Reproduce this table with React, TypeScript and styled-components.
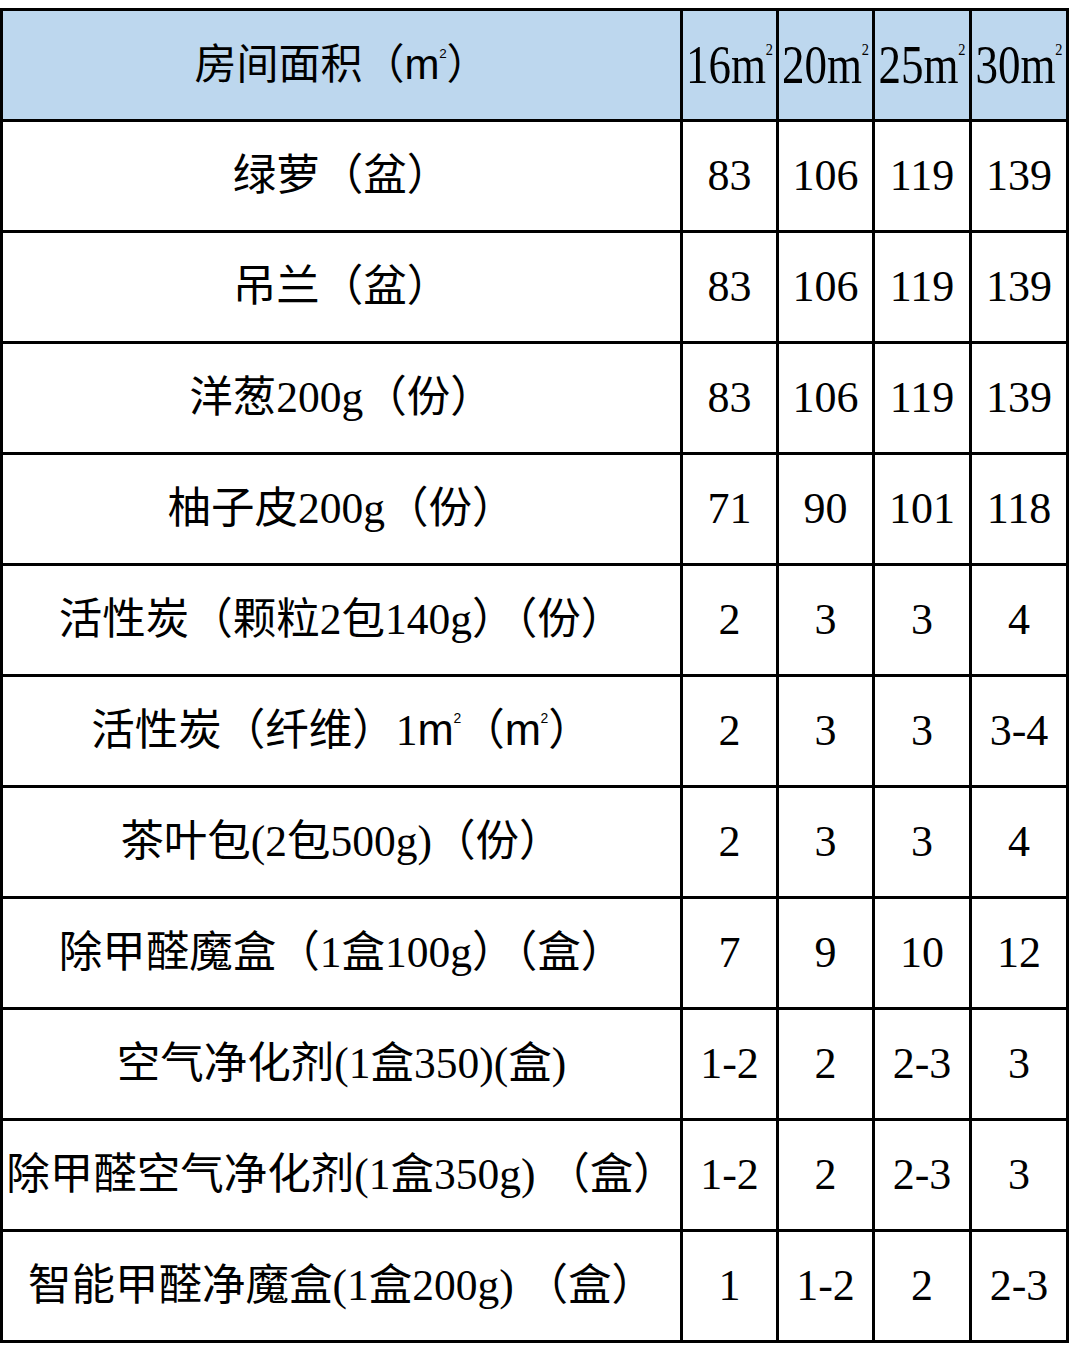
import React from 'react';
import styled, { createGlobalStyle } from 'styled-components';

type Row = {
  label: React.ReactNode
  values: string[]
}

const serifStack = '"Liberation Serif", "Noto Sans CJK SC", serif';

const GlobalStyle = createGlobalStyle`
  html, body {
    margin: 0;
    padding: 0;
    background: #fff;
  }
`;

const Page = styled.div`
  width: 1075px;
  padding-top: 8px;
`;

const Sheet = styled.table`
  border-collapse: collapse;
  table-layout: fixed;
  width: 1069px;
  color: #000;
  font-family: ${serifStack};
`;

const HeadRow = styled.tr`
  height: 111px;
  background: #bdd7ee;
`;

const BodyRow = styled.tr`
  height: 111px;
  background: #fff;
`;

const Cell = styled.td<{ $size: number }>`
  border: 3px solid #000;
  padding: 0;
  text-align: center;
  vertical-align: middle;
  white-space: nowrap;
  overflow: hidden;
  font-family: ${serifStack};
  font-weight: 400;
  font-size: ${props => props.$size}px;
  line-height: 1;
`;

// header area labels are drawn tall and narrow
const TallText = styled.span`
  display: inline-block;
  transform: scaleY(1.22);
`;

const Sans = styled.span`
  font-family: "Liberation Sans", "Noto Sans CJK SC", sans-serif;
`;

const Sup = styled.sup`
  font-size: 0.32em;
  vertical-align: 1.6em;
  line-height: 0;
  margin-left: -0.02em;
`;

const SansM = () => (
  <Sans>m<Sup>2</Sup></Sans>
);

const SerifM = () => (
  <>m<Sup>2</Sup></>
);

const areas = ['16', '20', '25', '30'];

const rows: Row[] = [
  { label: '绿萝（盆）', values: ['83', '106', '119', '139'] },
  { label: '吊兰（盆）', values: ['83', '106', '119', '139'] },
  { label: '洋葱200g（份）', values: ['83', '106', '119', '139'] },
  { label: '柚子皮200g（份）', values: ['71', '90', '101', '118'] },
  { label: '活性炭（颗粒2包140g）（份）', values: ['2', '3', '3', '4'] },
  { label: <>活性炭（纤维）1<SansM />（<SansM />）</>, values: ['2', '3', '3', '3-4'] },
  { label: '茶叶包(2包500g)（份）', values: ['2', '3', '3', '4'] },
  { label: '除甲醛魔盒（1盒100g）（盒）', values: ['7', '9', '10', '12'] },
  { label: '空气净化剂(1盒350)(盒)', values: ['1-2', '2', '2-3', '3'] },
  { label: '除甲醛空气净化剂(1盒350g) （盒）', values: ['1-2', '2', '2-3', '3'] },
  { label: '智能甲醛净魔盒(1盒200g) （盒）', values: ['1', '1-2', '2', '2-3'] },
];

export default function App() {
  return (
    <Page>
      <GlobalStyle />
      <Sheet>
        <colgroup>
          <col style={{ width: 680 }} />
          <col style={{ width: 96 }} />
          <col style={{ width: 96 }} />
          <col style={{ width: 97 }} />
          <col style={{ width: 97 }} />
        </colgroup>
        <thead>
          <HeadRow>
            <Cell as="th" $size={42}>
              房间面积（<SansM />）
            </Cell>
            {areas.map(a => (
              <Cell as="th" key={a} $size={45}>
                <TallText>
                  {a}<SerifM />
                </TallText>
              </Cell>
            ))}
          </HeadRow>
        </thead>
        <tbody>
          {rows.map((row, i) => (
            <BodyRow key={i}>
              <Cell $size={43.5}>{row.label}</Cell>
              {row.values.map((v, j) => (
                <Cell key={j} $size={44}>{v}</Cell>
              ))}
            </BodyRow>
          ))}
        </tbody>
      </Sheet>
    </Page>
  );
}
